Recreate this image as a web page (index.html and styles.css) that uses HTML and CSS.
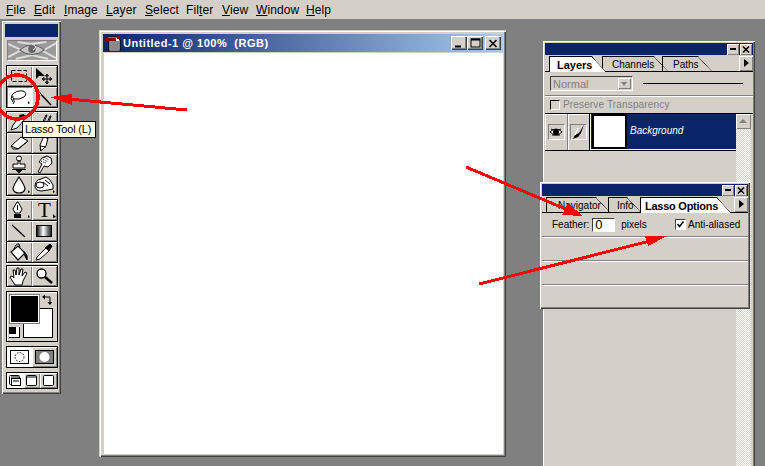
FILE: index.html
```html
<!DOCTYPE html>
<html lang="en">
<head>
    <meta charset="UTF-8">
    <title>Lasso Tool</title>
    <link rel="stylesheet" href="styles.css">
</head>
<body>
    <nav class="menubar">
        <span class="menu w-file"><u>F</u>ile</span>
        <span class="menu w-edit"><u>E</u>dit</span>
        <span class="menu w-image"><u>I</u>mage</span>
        <span class="menu w-layer"><u>L</u>ayer</span>
        <span class="menu w-select"><u>S</u>elect</span>
        <span class="menu w-filter">Fil<u>t</u>er</span>
        <span class="menu w-view"><u>V</u>iew</span>
        <span class="menu w-window"><u>W</u>indow</span>
        <span class="menu"><u>H</u>elp</span>
    </nav>

    <main class="desktop">
        <!-- toolbox -->
        <aside class="toolbox">
            <div class="toolbox-title"></div>
            <div class="toolbox-logo">
                <svg width="48" height="19" viewBox="0 0 50 19" preserveAspectRatio="none">
                    <rect width="50" height="19" fill="#9a9a9a"/>
                    <path d="M0 3 L14 9 L0 16 M50 2 L36 10 L50 17 M10 1 L24 3 L40 1 M8 18 L25 14 L42 18" stroke="#dcdcdc" stroke-width="2" fill="none"/>
                    <path d="M12 9 Q25 -1 38 9 Q25 18 12 9Z" fill="#c8c8c8" stroke="#555"/>
                    <circle cx="25" cy="8" r="4" fill="#666"/>
                    <path d="M25 3 Q32 6 26 9" stroke="#eee" fill="none"/>
                </svg>
            </div>
            <div class="tool-group">
                <button class="tool"><svg class="ico" viewBox="0 0 24 20"><rect x="4.500" y="4.500" width="15" height="11" fill="none" stroke="#000" stroke-dasharray="4 2"/></svg></button>
                <button class="tool"><svg class="ico" viewBox="0 0 24 20"><path d="M4 2 L4 13 L7 10 L13 10Z" fill="#000"/><path d="M15 9 v8 M11 13 h8 M15 8 l-1.500 2 h3z M15 18 l-1.500 -2 h3z M10 13 l2 -1.500 v3z M20 13 l-2 -1.500 v3z" stroke="#000" fill="none"/></svg></button>
                <button class="tool tool-on"><svg class="ico" viewBox="0 0 24 20"><path d="M6 15 Q3 12 5 8 Q9 3 16 4 Q21 6 17 10 Q12 13 7 12 Q5 11 6 9 M6 12 Q9 14 6 17" fill="none" stroke="#000"/><path d="M21 17 v-3 l2 2z" fill="#000"/></svg></button>
                <button class="tool"><svg class="ico" viewBox="0 0 24 20"><path d="M4 2 L19 18" stroke="#000" stroke-width="1.500"/><path d="M4 2 L9 8" stroke="#fff"/></svg></button>
            </div>
            <div class="tool-group">
                <button class="tool"><svg class="ico" viewBox="0 0 24 20"><path d="M4 18 L6 13 L14 3 L19 6 L10 16Z" fill="#fff" stroke="#000"/><path d="M12 3 L17 2 L19 6 L14 7Z" fill="#000"/></svg></button>
                <button class="tool"><svg class="ico" viewBox="0 0 24 20"><path d="M7 18 L14 3 L15 3 L9 18 M12 18 L18 4 L19 4 L14 18" fill="#fff" stroke="#000"/></svg></button>
                <button class="tool"><svg class="ico" viewBox="0 0 24 20"><path d="M4 13 L14 4 L21 8 L11 16 L6 16Z" fill="#fff" stroke="#000"/><path d="M4 13 L11 16 L21 8" fill="none" stroke="#000"/></svg></button>
                <button class="tool"><svg class="ico" viewBox="0 0 24 20"><path d="M9 18 L8 12 L12 3 L16 5 L14 13Z" fill="#fff" stroke="#000"/><path d="M12 3 L16 5" stroke="#000" stroke-width="2"/><path d="M8 13 L14 14 M9 18 L8 15" stroke="#000"/></svg></button>
                <button class="tool"><svg class="ico" viewBox="0 0 24 20"><circle cx="12" cy="4.500" r="2.500" fill="#fff" stroke="#000"/><path d="M11 7 h2 v3 h5 v4 H6 v-4 h5z" fill="#fff" stroke="#000"/><path d="M5 15.500 h14 M9 16 h6 l-3 3z" stroke="#000" fill="#000"/></svg></button>
                <button class="tool"><svg class="ico" viewBox="0 0 24 20"><path d="M6 18 L10 10 L7 8 L10 4 L15 2 L19 4 L20 9 L16 13 L12 12 L8 19Z" fill="#fff" stroke="#000"/><path d="M9 7 L14 9 M11 5 L16 8 M12 3 L17 6" stroke="#000" stroke-dasharray="1 1"/></svg></button>
                <button class="tool"><svg class="ico" viewBox="0 0 24 20"><path d="M12 2 Q6 11 6 14 Q7 18 12 18 Q17 18 18 14 Q18 11 12 2Z" fill="#fff" stroke="#000" stroke-width="1.200"/><path d="M21 18 v-3 l2 2z" fill="#000"/></svg></button>
                <button class="tool"><svg class="ico" viewBox="0 0 24 20"><path d="M3 12 Q3 5 9 4 L14 2 L18 5 L21 10 L21 14 L16 15 L9 16 Q4 16 3 12Z" fill="#fff" stroke="#000"/><ellipse cx="8" cy="10" rx="4" ry="3" fill="none" stroke="#000"/><path d="M13 5 L18 9 M11 7 L16 11" stroke="#000"/><path d="M21 18 v-3 l2 2z" fill="#000"/></svg></button>
            </div>
            <div class="tool-group">
                <button class="tool"><svg class="ico" viewBox="0 0 24 20"><path d="M10 2 L6 9 L8 13 H13 L15 9 L11 2Z" fill="#fff" stroke="#000"/><path d="M10.500 5 V10" stroke="#000"/><rect x="7" y="14" width="7" height="4" fill="#000"/><path d="M21 18 v-3 l2 2z" fill="#000"/></svg></button>
                <button class="tool"><span class="t-glyph">T</span><svg class="ico-corner" viewBox="0 0 3 4"><path d="M0 4 V0 L3 3Z"/></svg></button>
                <button class="tool"><svg class="ico" viewBox="0 0 24 20"><path d="M5 4 L18 16" stroke="#000" stroke-width="1.300"/></svg></button>
                <button class="tool"><svg class="ico" viewBox="0 0 24 20"><defs><linearGradient id="fade"><stop offset="0" stop-color="#000"/><stop offset=".45" stop-color="#fff"/><stop offset="1" stop-color="#111"/></linearGradient></defs><rect x="4.500" y="4.500" width="15" height="11" fill="url(#fade)" stroke="#000"/></svg></button>
                <button class="tool"><svg class="ico" viewBox="0 0 24 20"><path d="M4 10 L11 4 L18 11 L11 18Z" fill="#fff" stroke="#000" stroke-width="1.200"/><path d="M7 7 Q9 1 12 2 L13 5" fill="none" stroke="#000"/><path d="M17 10 Q21 12 20 18 L18 14Z" fill="#000" stroke="#000"/></svg></button>
                <button class="tool"><svg class="ico" viewBox="0 0 24 20"><path d="M4 18 L5 15 L14 6 L17 9 L8 17Z" fill="#fff" stroke="#000"/><path d="M13 6 L18 2 L20 4 L17 9" fill="#000" stroke="#000"/></svg></button>
            </div>
            <div class="tool-group tool-group-last">
                <button class="tool"><svg class="ico" viewBox="0 0 24 20"><path d="M8 19 L3 11 L5 10 L7 12 L6 4 L8 4 L9 9 L10 2 L12 2 L12 9 L14 3 L16 3 L15 10 L18 6 L20 7 L16 15 L15 19Z" fill="#fff" stroke="#000"/></svg></button>
                <button class="tool"><svg class="ico" viewBox="0 0 24 20"><circle cx="9.500" cy="7.500" r="4.500" fill="#fff" stroke="#000" stroke-width="1.300"/><path d="M13 11 L20 17" stroke="#000" stroke-width="2.500"/></svg></button>
            </div>
            <div class="color-box">
                <div class="swap">
                    <svg width="12" height="12" viewBox="0 0 12 12"><path d="M1 3 L4 0.500 V5.500Z M9 11 L6.500 8 H11.500Z" fill="#000"/><path d="M4 3 H9 V8" fill="none" stroke="#000"/></svg>
                </div>
                <div class="swatch-bg"></div>
                <div class="swatch-fg"></div>
                <div class="default-colors"></div>
            </div>
            <div class="mask-row">
                <button class="mask-btn mask-on">
                    <svg width="19" height="14" viewBox="0 0 19 14"><rect x=".5" y=".5" width="18" height="13" fill="#fff" stroke="#000"/><circle cx="9.500" cy="7" r="4.500" fill="none" stroke="#000" stroke-dasharray="1.500 1.500"/></svg>
                </button>
                <button class="mask-btn">
                    <svg width="19" height="14" viewBox="0 0 19 14"><rect x=".5" y=".5" width="18" height="13" fill="#808080" stroke="#000"/><circle cx="9.500" cy="7" r="5" fill="#fff"/></svg>
                </button>
            </div>
            <div class="screen-row">
                <button class="scr-btn scr-on"><svg width="14" height="13" viewBox="0 0 14 13"><rect x="1.500" y="1.500" width="10" height="9" rx="1" fill="none" stroke="#000"/><rect x="3.500" y="4.500" width="9" height="7" fill="#fff" stroke="#000"/><path d="M3 3 H11 M5 7 H11" stroke="#000"/></svg></button>
                <button class="scr-btn"><svg width="13" height="13" viewBox="0 0 13 13"><rect x="1.500" y="1.500" width="10" height="10" rx="1" fill="#fff" stroke="#000"/><path d="M1 3 H12" stroke="#000"/></svg></button>
                <button class="scr-btn"><svg width="13" height="13" viewBox="0 0 13 13"><rect x="1.500" y="1.500" width="10" height="10" rx="1" fill="#fff" stroke="#000"/></svg></button>
            </div>
        </aside>

        <!-- document window -->
        <section class="doc">
            <header class="doc-title">
                <svg class="doc-icon" width="16" height="15" viewBox="0 0 16 15">
                    <path d="M2 1 H12 L15 4 V15 H4 V5 H2Z" fill="#fff" stroke="#000"/>
                    <rect x="5" y="5" width="9" height="9" fill="#8a8a8a"/>
                    <rect x="0" y="2" width="11" height="3" fill="#8a0000"/>
                    <rect x="12" y="0" width="3" height="3" fill="#8a0000"/>
                </svg>
                <span class="doc-name">Untitled-1 @ 100%&nbsp;&nbsp;(RGB)</span>
                <span class="win-btns">
                    <button class="win-btn"><svg width="10" height="9" viewBox="0 0 10 9"><path d="M1 7.500 H7" stroke="#000" stroke-width="2"/></svg></button>
                    <button class="win-btn"><svg width="11" height="10" viewBox="0 0 11 10"><rect x="1" y="1" width="9" height="8" fill="none" stroke="#000"/><path d="M1 1.500 H10" stroke="#000" stroke-width="2"/></svg></button>
                    <button class="win-btn win-btn-close"><svg width="10" height="9" viewBox="0 0 10 9"><path d="M1.500 1 L8.500 8 M8.500 1 L1.500 8" stroke="#000" stroke-width="1.500"/></svg></button>
                </span>
            </header>
            <div class="canvas"></div>
        </section>

        <!-- layers palette -->
        <section class="palette layers">
            <header class="pal-title">
                <button class="pal-btn"><svg width="8" height="7" viewBox="0 0 8 7"><path d="M1 3 H7" stroke="#000" stroke-width="2"/></svg></button>
                <button class="pal-btn"><svg width="8" height="7" viewBox="0 0 8 7"><path d="M1 0.500 L7 6.500 M7 0.500 L1 6.500" stroke="#000" stroke-width="1.500"/></svg></button>
            </header>
            <div class="tabs">
                <span class="tab tab-on tab-layers">Layers</span>
                <span class="tab tab-channels">Channels</span>
                <span class="tab tab-paths">Paths</span>
                <button class="tab-arrow"></button>
            </div>
            <div class="blend-row">
                <div class="blend-select">Normal<span class="blend-arrow"></span></div>
                <div class="opacity-line"></div>
            </div>
            <div class="preserve-row">
                <span class="preserve-box"></span>
                <span class="preserve-label">Preserve Transparency</span>
            </div>
            <div class="layer-area">
                <div class="layer-list">
                    <div class="layer-row">
                        <div class="layer-cell cell-eye">
                            <span class="mini-box"><svg width="14" height="12" viewBox="0 0 14 12"><path d="M1 6 Q7 0 13 6 Q7 12 1 6Z" fill="#fff" stroke="#000"/><circle cx="7" cy="6" r="3" fill="#000"/><path d="M2 3 L4 4 M12 3 L10 4 M3 9 H11" stroke="#000"/></svg></span>
                        </div>
                        <div class="layer-cell cell-brush">
                            <span class="mini-box"><svg width="14" height="14" viewBox="0 0 14 14"><path d="M12 0 L7 8 L3 10 L1 14 L6 12 L9 8Z" fill="#000"/><path d="M3 10 L6 3" stroke="#fff"/></svg></span>
                        </div>
                        <div class="layer-main">
                            <div class="layer-thumb"></div>
                            <span class="layer-name">Background</span>
                        </div>
                    </div>
                </div>
                <div class="scroll">
                    <button class="scroll-up"></button>
                </div>
            </div>
        </section>

        <!-- options palette -->
        <section class="palette options">
            <header class="pal-title">
                <button class="pal-btn"><svg width="8" height="7" viewBox="0 0 8 7"><path d="M1 3 H7" stroke="#000" stroke-width="2"/></svg></button>
                <button class="pal-btn"><svg width="8" height="7" viewBox="0 0 8 7"><path d="M1 0.500 L7 6.500 M7 0.500 L1 6.500" stroke="#000" stroke-width="1.500"/></svg></button>
            </header>
            <div class="tabs tabs-opt">
                <span class="tab tab-nav">Navigator</span>
                <span class="tab tab-info">Info</span>
                <span class="tab tab-on tab-lasso">Lasso Options</span>
                <button class="tab-arrow"></button>
            </div>
            <div class="opt-row opt-first">
                <span class="opt-label">Feather:</span>
                <span class="opt-input">0</span>
                <span class="opt-label">pixels</span>
                <span class="opt-check">
                    <svg width="9" height="9" viewBox="0 0 9 9"><path d="M1.500 4 L3.500 6.500 L7.500 1.500" fill="none" stroke="#000" stroke-width="1.500"/></svg>
                </span>
                <span class="opt-label opt-anti">Anti-aliased</span>
            </div>
            <div class="opt-row"></div>
            <div class="opt-row"></div>
            <div class="opt-row opt-last"></div>
        </section>

        <!-- tooltip and red markup over the screenshot -->
        <div class="tooltip">Lasso Tool (L)</div>
        <svg class="markup" width="765" height="466" viewBox="0 0 765 466" shape-rendering="crispEdges">
            <ellipse cx="17" cy="97" rx="21" ry="22" fill="none" stroke="#f00" stroke-width="3.500"/>
            <path d="M187 110 L68 99" stroke="#f00" stroke-width="3"/>
            <path d="M50 97 L72 94 L72 105Z" fill="#f00"/>
            <path d="M466 167 L568 210" stroke="#f00" stroke-width="3"/>
            <path d="M583 216 L562 215 L568 203Z" fill="#f00"/>
            <path d="M479 284 L650 241" stroke="#f00" stroke-width="3"/>
            <path d="M667 236 L645 236 L648 246Z" fill="#f00"/>
        </svg>
    </main>
</body>
</html>
```

FILE: styles.css
```css
* {
    box-sizing: border-box;
}

html, body {
    margin: 0;
    height: 466px;
    overflow: hidden;
}

body {
    width: 765px;
    font-family: 'Liberation Sans', sans-serif;
    font-size: 11px;
    color: #000;
    background: #808080;
}

button {
    display: block;
    margin: 0;
    padding: 0;
    border: none;
    background: #d4d0c8;
}

/* menu */
.menubar {
    display: flex;
    align-items: center;
    height: 19px;
    padding-left: 6px;
    background: #d4d0c8;
    font-size: 12px;
    letter-spacing: 0.1px;
}

.menu { margin-right: 12px; }
.w-file { width: 16px; }
.w-edit { width: 18px; }
.w-image { width: 30px; }
.w-layer { width: 27px; }
.w-select { width: 29px; }
.w-filter { width: 24px; }
.w-view { width: 22px; }
.w-window { width: 38px; }

.desktop {
    position: relative;
    height: 447px;
    overflow: hidden;
}

/* toolbox */
.toolbox {
    position: absolute;
    left: 2px;
    top: 2px;
    width: 59px;
    height: 373px;
    padding: 3px 3px 0 3px;
    background: #d4d0c8;
    box-shadow: inset 1px 1px #fff, inset -1px -1px #404040, inset -2px -2px #808080;
}

.toolbox-title {
    height: 13px;
    background: #0a246a;
}

.toolbox-logo {
    width: 50px;
    height: 21px;
    margin: 3px 0 0 2px;
    border: 1px solid;
    border-color: #808080 #fff #fff #808080;
}

.toolbox-logo svg { display: block; }

.tool-group {
    display: grid;
    grid-template-columns: 25px 25px;
    grid-auto-rows: 20px;
    gap: 1px 0;
    width: 52px;
    margin: 3px 0 0 1px;
    padding: 1px;
    background: #000;
    box-shadow: 0 1px #fff;
}

.toolbox-logo + .tool-group { margin-top: 4px; }
.tool-group-last { margin-top: 2px; }

.tool {
    position: relative;
    width: 25px;
    height: 20px;
    box-shadow: inset 1px 1px #fff, inset -1px -1px #808080;
}

.tool-on {
    background: #fff;
    box-shadow: inset 1px 1px #808080;
}

.ico {
    display: block;
    width: 24px;
    height: 20px;
}

.ico-corner {
    position: absolute;
    right: 1px;
    bottom: 2px;
    width: 3px;
    height: 4px;
}

.t-glyph {
    font-family: 'Liberation Serif', serif;
    font-size: 21px;
    line-height: 20px;
}

.color-box {
    position: relative;
    width: 52px;
    height: 51px;
    margin: 4px 0 0 1px;
    background: #d4d0c8;
    border: 1px solid #000;
    box-shadow: inset 1px 1px #fff;
}

.swatch-fg {
    position: absolute;
    left: 4px;
    top: 4px;
    width: 27px;
    height: 26px;
    background: #000;
    box-shadow: 0 0 0 1px #fff, 0 0 0 2px #808080;
}

.swatch-bg {
    position: absolute;
    left: 16px;
    top: 16px;
    width: 30px;
    height: 30px;
    background: #fff;
    border: 1px solid #000;
}

.swap {
    position: absolute;
    left: 34px;
    top: 2px;
}

.swap svg { display: block; }

.default-colors {
    position: absolute;
    left: 2px;
    top: 35px;
    width: 11px;
    height: 11px;
    background: linear-gradient(#000, #000) 0 0 / 7px 7px no-repeat, #fff;
    border: 1px solid #000;
    border-width: 0 1px 1px 0;
}

.mask-row, .screen-row {
    display: flex;
    width: 52px;
    margin: 4px 0 0 1px;
    padding: 1px;
    background: #000;
}

.mask-btn {
    display: flex;
    align-items: center;
    justify-content: center;
    width: 25px;
    height: 20px;
    box-shadow: inset 1px 1px #fff, inset -1px -1px #808080;
}

.mask-on {
    background: #fff;
    box-shadow: none;
}

.scr-btn {
    display: flex;
    align-items: center;
    justify-content: center;
    width: 16.6px;
    height: 15px;
    box-shadow: inset 1px 1px #fff, inset -1px -1px #808080;
}

.scr-on {
    background: #fff;
    box-shadow: none;
}

/* document window */
.doc {
    position: absolute;
    left: 99px;
    top: 11px;
    display: flex;
    flex-direction: column;
    width: 407px;
    height: 427px;
    padding: 4px 3px 3px 4px;
    background: #d4d0c8;
    box-shadow: inset 1px 1px #d4d0c8, inset 2px 2px #fff, inset -1px -1px #404040, inset -2px -2px #808080;
}

.doc-title {
    display: flex;
    align-items: center;
    height: 18px;
    padding: 0 2px;
    color: #fff;
    background: linear-gradient(90deg, #0a246a, #a6caf0);
}

.doc-icon { flex: none; margin-right: 2px; }

.doc-name {
    flex: 1;
    font-weight: bold;
    letter-spacing: 0.5px;
}

.win-btns {
    display: flex;
    gap: 0;
}

.win-btn {
    display: flex;
    align-items: center;
    justify-content: center;
    width: 16px;
    height: 14px;
    box-shadow: inset 1px 1px #fff, inset -1px -1px #404040, inset -2px -2px #808080;
}

.win-btn-close { margin-left: 2px; }

.canvas {
    flex: 1;
    background: #fff;
    box-shadow: inset 1px 1px #d4d0c8;
}

/* palettes */
.palette {
    position: absolute;
    padding: 2px;
    background: #d4d0c8;
    box-shadow: inset 1px 1px #fff, inset -1px -1px #404040, inset -2px -2px #808080;
}

.layers {
    left: 543px;
    top: 22px;
    width: 212px;
    height: 430px;
}

.options {
    left: 540px;
    top: 163px;
    width: 210px;
    height: 127px;
}

.pal-title {
    display: flex;
    justify-content: flex-end;
    align-items: center;
    gap: 1px;
    height: 12px;
    padding-right: 1px;
    background: #0a246a;
}

.pal-btn {
    display: flex;
    align-items: center;
    justify-content: center;
    width: 12px;
    height: 11px;
    box-shadow: inset 1px 1px #fff, inset -1px -1px #808080;
}

.tabs {
    position: relative;
    display: flex;
    height: 16px;
    margin-top: 1px;
    padding-left: 4px;
    border-bottom: 1px solid #000;
    font-size: 10px;
}

.tab {
    display: flex;
    align-items: center;
    height: 15px;
    padding-left: 7px;
    border-left: 1px solid #000;
    border-top: 1px solid #000;
    white-space: nowrap;
    clip-path: polygon(0 0, calc(100% - 14px) 0, 100% 100%, 0 100%);
    background: linear-gradient(to top right, #d4d0c8 calc(50% - 0.5px), #000 50%, #d4d0c8 calc(50% + 0.5px)) right / 14px 15px no-repeat;
}

.tab-on {
    background: linear-gradient(to top right, #fff calc(50% - 0.5px), #000 50%, #d4d0c8 calc(50% + 0.5px)) right / 14px 15px no-repeat, linear-gradient(#fff, #fff) left / calc(100% - 14px) 15px no-repeat;
    height: 16px;
    z-index: 1;
    font-size: 11px;
    font-weight: bold;
}

.tab-layers { width: 57px; }
.tab-channels { width: 66px; margin-left: -4px; padding-left: 9px; }
.tab-paths { width: 50px; margin-left: -6px; padding-left: 10px; }
.tab-nav { width: 64px; padding-left: 11px; }
.tab-info { width: 33px; margin-left: -2px; padding-left: 8px; }
.tab-lasso { width: 91px; margin-left: -1px; padding-left: 4px; letter-spacing: -0.25px; }

.tab-arrow {
    position: absolute;
    right: 0;
    top: 0;
    width: 14px;
    height: 15px;
    box-shadow: inset 1px 1px #fff, inset -1px -1px #808080;
}

.tab-arrow::after {
    content: '';
    position: absolute;
    left: 5px;
    top: 3px;
    border: 4.500px solid transparent;
    border-left: 5px solid #000;
    border-right: 0;
}

.blend-row {
    display: flex;
    align-items: center;
    height: 24px;
    padding-left: 5px;
    border-bottom: 1px solid #808080;
    box-shadow: 0 1px #fff;
}

.blend-select {
    position: relative;
    display: flex;
    align-items: center;
    width: 83px;
    height: 15px;
    padding-left: 2px;
    color: #808080;
    border: 1px solid;
    border-color: #404040 #fff #fff #404040;
}

.blend-arrow {
    position: absolute;
    right: 1px;
    top: 1px;
    width: 13px;
    height: 11px;
    background: #d4d0c8;
    box-shadow: inset 1px 1px #fff, inset -1px -1px #808080;
}

.blend-arrow::after {
    content: '';
    position: absolute;
    left: 3px;
    top: 4px;
    border: 3.500px solid transparent;
    border-top: 4px solid #808080;
    border-bottom: 0;
}

.opacity-line {
    width: 100px;
    height: 1px;
    margin-left: 10px;
    background: #000;
}

.preserve-row {
    display: flex;
    align-items: center;
    gap: 3px;
    height: 17px;
    padding-left: 5px;
    color: #808080;
    font-size: 10px;
    letter-spacing: 0.15px;
}

.preserve-box {
    width: 10px;
    height: 10px;
    border: 1px solid;
    border-color: #000 #fff #fff #000;
}

.layer-area {
    display: flex;
    height: 372px;
    border-top: 1px solid #000;
}

.layer-list {
    width: 191px;
}

.layer-row {
    display: flex;
    height: 37px;
    border-bottom: 1px solid #000;
}

.layer-cell {
    display: flex;
    align-items: center;
    justify-content: center;
    height: 100%;
    box-shadow: inset 1px 1px #fff;
}

.cell-eye {
    width: 23px;
    border-right: 1px solid #808080;
}

.cell-brush {
    width: 22px;
    border-right: 1px solid #000;
}

.mini-box {
    display: flex;
    align-items: center;
    justify-content: center;
    width: 17px;
    height: 16px;
    border: 1px solid;
    border-color: #808080 #fff #fff #808080;
}

.layer-main {
    flex: 1;
    display: flex;
    align-items: center;
    gap: 3px;
    height: 100%;
    padding-left: 1px;
    background: #0a246a;
    border-left: 1px solid #fff;
    border-bottom: 1px solid #fff;
}

.layer-thumb {
    width: 35px;
    height: 35px;
    background: #fff;
    border: 2px solid #000;
}

.layer-name {
    margin-top: -3px;
    color: #fff;
    font-style: italic;
    font-size: 10px;
}

.scroll {
    width: 15px;
    background: repeating-conic-gradient(#d4d0c8 0 25%, #fff 0 50%) 0 0 / 2px 2px;
}

.scroll-up {
    position: relative;
    width: 15px;
    height: 15px;
    box-shadow: inset 1px 1px #fff, inset -1px -1px #808080;
}

.scroll-up::after {
    content: '';
    position: absolute;
    left: 3px;
    top: 5px;
    border: 4px solid transparent;
    border-bottom: 4px solid #808080;
    border-top: 0;
}

.opt-row {
    display: flex;
    align-items: center;
    height: 24px;
    padding-left: 10px;
    border-bottom: 1px solid #808080;
    box-shadow: 0 1px #fff;
}

.opt-first {
    font-size: 10px;
}

.opt-label { white-space: nowrap; }

.opt-anti {
    flex: none;
    width: 60px;
}

.opt-last {
    border-bottom: none;
    box-shadow: none;
    height: 22px;
}

.opt-input {
    display: flex;
    align-items: center;
    width: 23px;
    height: 14px;
    margin: 0 6px 0 3px;
    padding-left: 2px;
    font-size: 13px;
    background: #fff;
    border: 1px solid;
    border-color: #404040 #fff #fff #404040;
}

.opt-check {
    display: flex;
    align-items: center;
    justify-content: center;
    width: 11px;
    height: 11px;
    margin: 0 2px 0 auto;
    background: #fff;
    border: 1px solid;
    border-color: #404040 #fff #fff #404040;
}

/* tooltip, red markup */
.tooltip {
    position: absolute;
    left: 22px;
    top: 102px;
    width: 74px;
    height: 17px;
    padding: 1px 0 0 2px;
    background: #ffffe1;
    border: 1px solid #000;
    white-space: nowrap;
    letter-spacing: -0.2px;
}

.markup {
    position: absolute;
    left: 0;
    top: -19px;
    pointer-events: none;
}
```
